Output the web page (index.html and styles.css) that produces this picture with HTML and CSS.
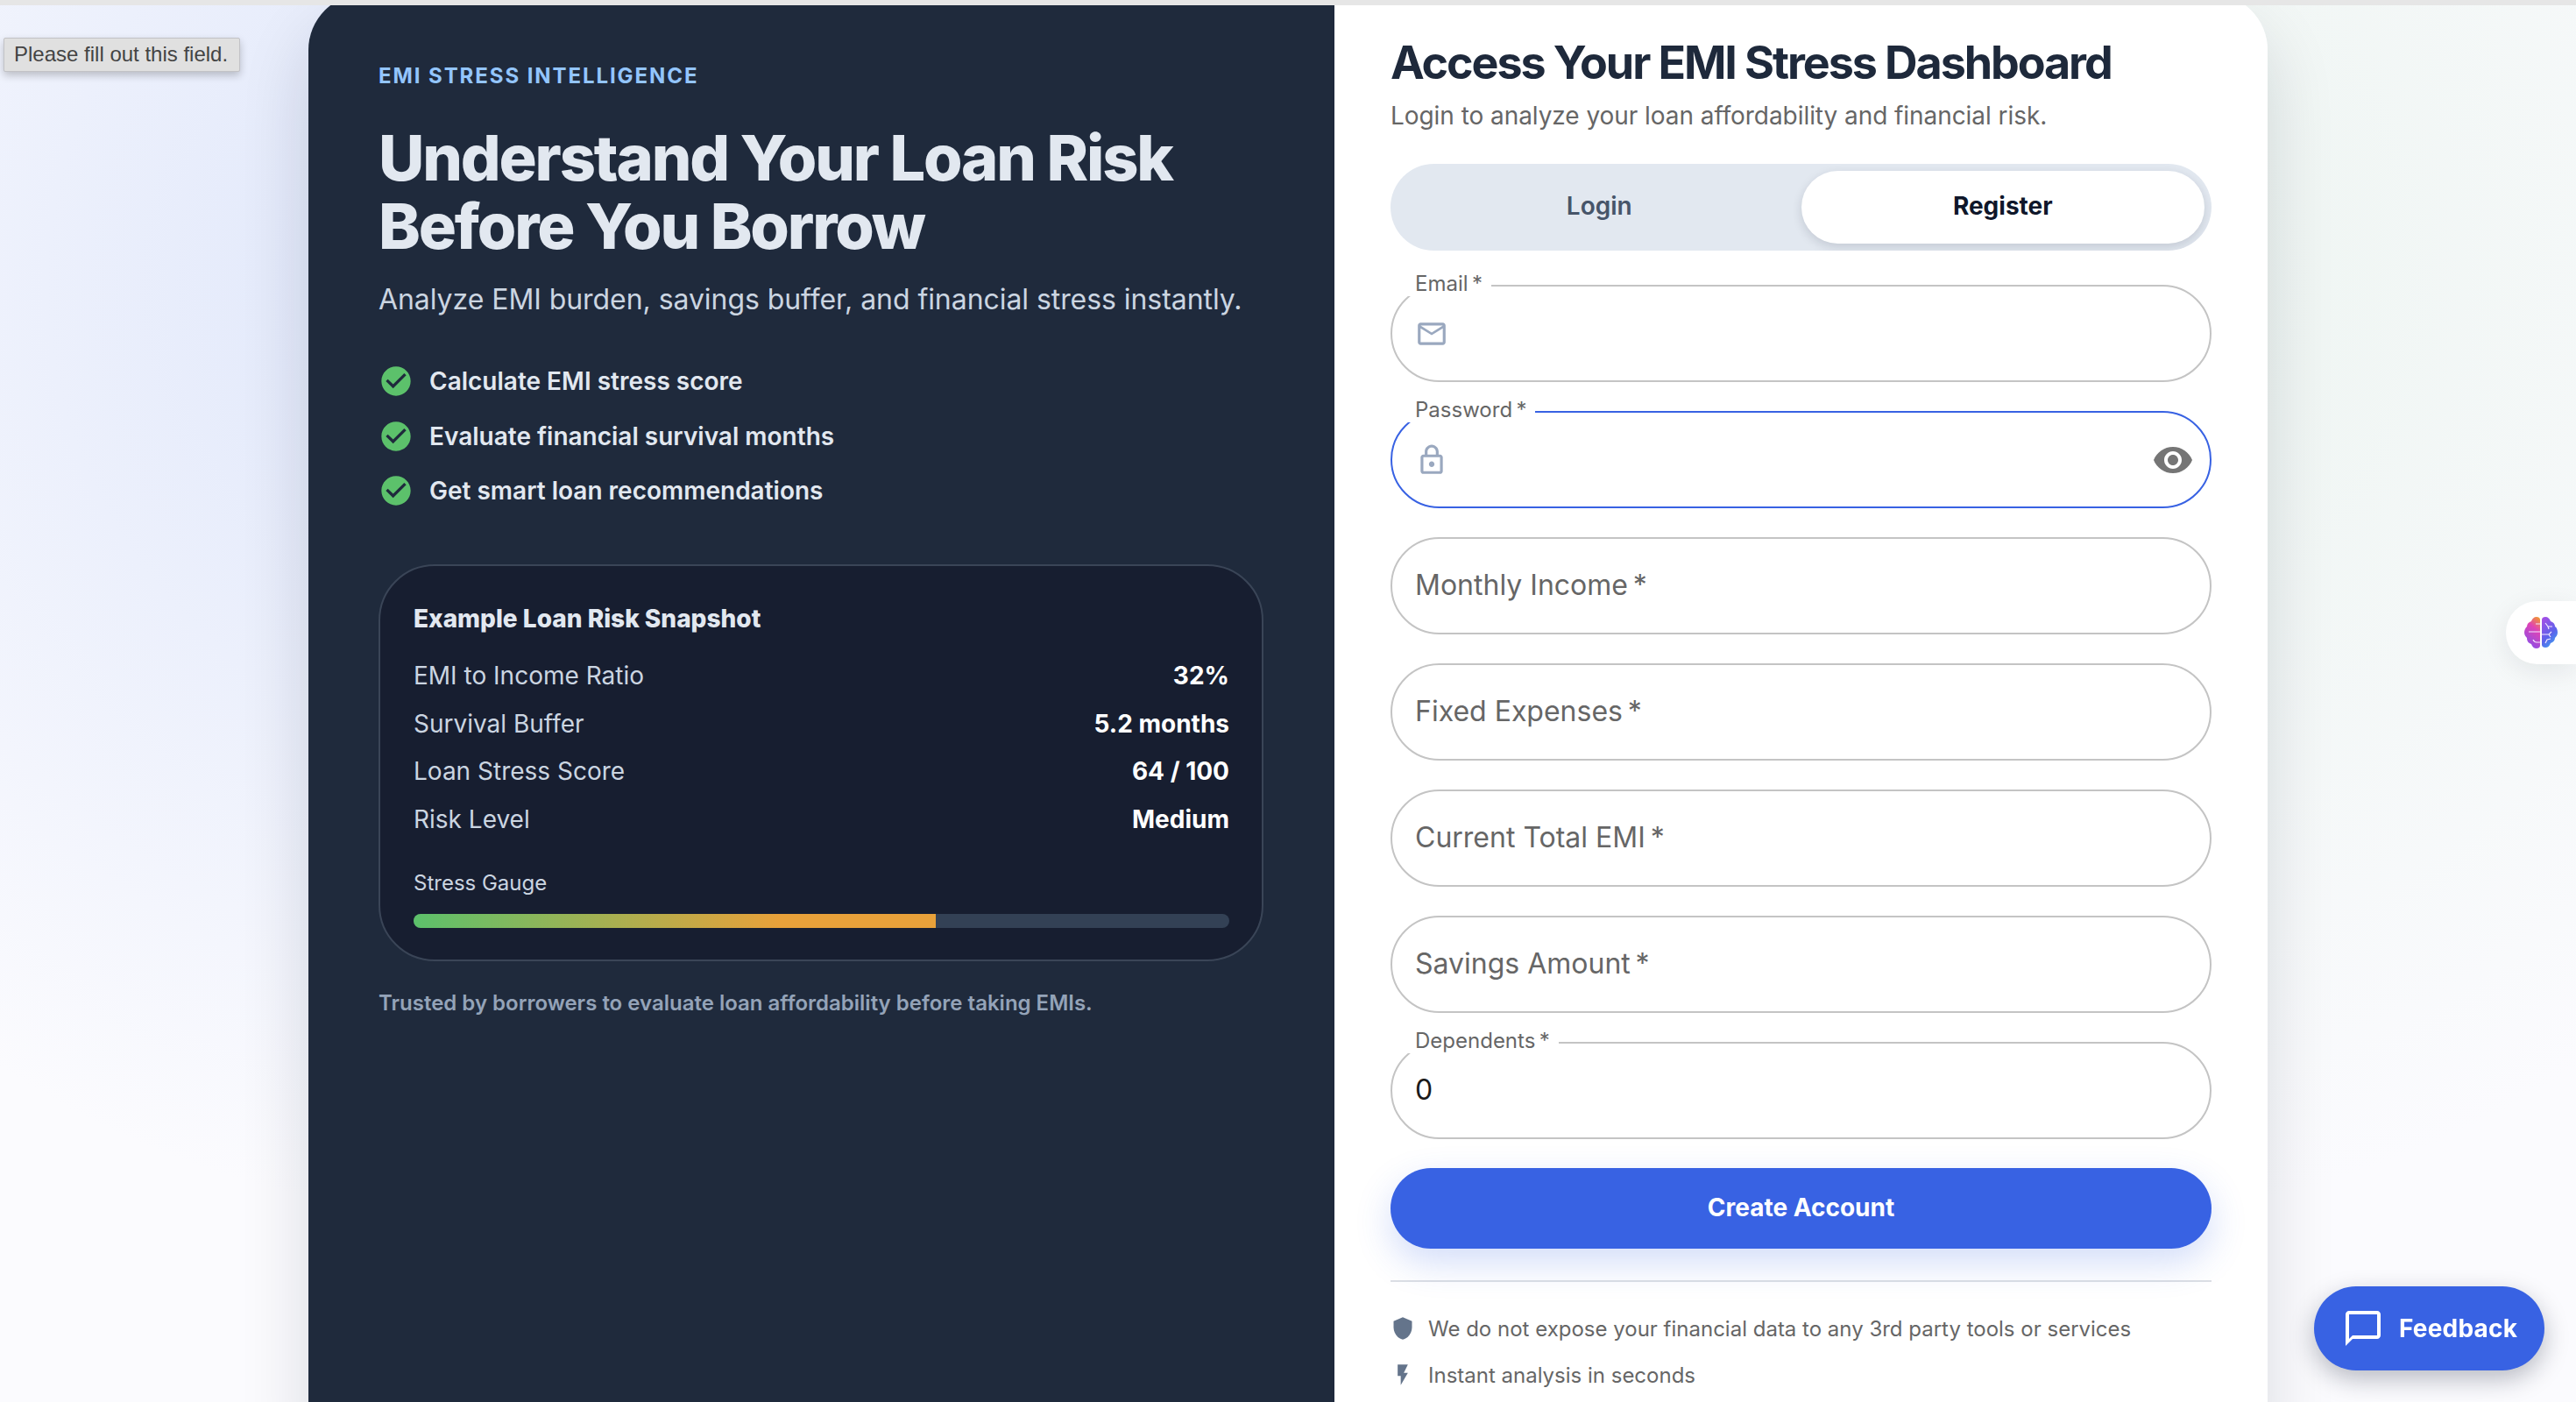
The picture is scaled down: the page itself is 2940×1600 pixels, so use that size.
FILE: index.html
```html
<!DOCTYPE html>
<html lang="en">
<head>
  <meta charset="UTF-8">
  <title>EMI Stress Dashboard</title>
  <link rel="stylesheet" href="styles.css">
</head>
<body>

  <div class="tooltip">Please fill out this field.</div>

  <div class="page">
    <main class="card">
      <section class="intro">
        <div class="eyebrow">EMI STRESS INTELLIGENCE</div>
        <h1>Understand Your Loan Risk<br>Before You Borrow</h1>
        <p class="lead">Analyze EMI burden, savings buffer, and financial stress instantly.</p>

        <ul class="checks">
          <li>
            <svg class="check-icon" viewBox="0 0 24 24"><path d="M12 2C6.48 2 2 6.48 2 12s4.48 10 10 10 10-4.48 10-10S17.52 2 12 2zm-2 15l-5-5 1.41-1.41L10 14.17l7.59-7.59L19 8l-9 9z"/></svg>
            Calculate EMI stress score
          </li>
          <li>
            <svg class="check-icon" viewBox="0 0 24 24"><path d="M12 2C6.48 2 2 6.48 2 12s4.48 10 10 10 10-4.48 10-10S17.52 2 12 2zm-2 15l-5-5 1.41-1.41L10 14.17l7.59-7.59L19 8l-9 9z"/></svg>
            Evaluate financial survival months
          </li>
          <li>
            <svg class="check-icon" viewBox="0 0 24 24"><path d="M12 2C6.48 2 2 6.48 2 12s4.48 10 10 10 10-4.48 10-10S17.52 2 12 2zm-2 15l-5-5 1.41-1.41L10 14.17l7.59-7.59L19 8l-9 9z"/></svg>
            Get smart loan recommendations
          </li>
        </ul>

        <div class="snapshot">
          <h3>Example Loan Risk Snapshot</h3>
          <div class="stats">
            <div class="stat"><span>EMI to Income Ratio</span><b>32%</b></div>
            <div class="stat"><span>Survival Buffer</span><b>5.2 months</b></div>
            <div class="stat"><span>Loan Stress Score</span><b>64 / 100</b></div>
            <div class="stat"><span>Risk Level</span><b>Medium</b></div>
          </div>
          <div class="gauge-label">Stress Gauge</div>
          <div class="gauge"><div class="gauge-fill" style="width: 64%"></div></div>
        </div>

        <p class="trusted">Trusted by borrowers to evaluate loan affordability before taking EMIs.</p>
      </section>

      <section class="auth">
        <h2>Access Your EMI Stress Dashboard</h2>
        <p class="auth-sub">Login to analyze your loan affordability and financial risk.</p>

        <div class="toggle">
          <button class="tab">Login</button>
          <button class="tab active">Register</button>
        </div>

        <form class="fields">
          <div class="field">
            <label>Email&#8201;*</label>
            <svg class="field-icon" viewBox="0 0 24 24"><path d="M20 4H4c-1.1 0-1.99.9-1.99 2L2 18c0 1.1.9 2 2 2h16c1.1 0 2-.9 2-2V6c0-1.1-.9-2-2-2zm0 14H4V8l8 5 8-5v10zm-8-7L4 6h16l-8 5z"/></svg>
            <input type="email">
          </div>
          <div class="field focused">
            <label>Password&#8201;*</label>
            <svg class="field-icon" viewBox="0 0 24 24"><path d="M18 8h-1V6c0-2.76-2.24-5-5-5S7 3.24 7 6v2H6c-1.1 0-2 .9-2 2v10c0 1.1.9 2 2 2h12c1.1 0 2-.9 2-2V10c0-1.1-.9-2-2-2zM9 6c0-1.66 1.34-3 3-3s3 1.34 3 3v2H9V6zm9 14H6V10h12v10zm-6-3c1.1 0 2-.9 2-2s-.9-2-2-2-2 .9-2 2 .9 2 2 2z"/></svg>
            <input type="password">
            <svg class="eye-icon" viewBox="0 0 24 24"><path d="M12 4.5C7 4.5 2.73 7.61 1 12c1.73 4.39 6 7.5 11 7.5s9.27-3.11 11-7.5c-1.73-4.39-6-7.5-11-7.5zM12 17c-2.76 0-5-2.24-5-5s2.24-5 5-5 5 2.24 5 5-2.24 5-5 5zm0-8c-1.66 0-3 1.34-3 3s1.34 3 3 3 3-1.34 3-3-1.34-3-3-3z"/></svg>
          </div>
          <div class="field"><input type="text" placeholder="Monthly Income&#8201;*"></div>
          <div class="field"><input type="text" placeholder="Fixed Expenses&#8201;*"></div>
          <div class="field"><input type="text" placeholder="Current Total EMI&#8201;*"></div>
          <div class="field"><input type="text" placeholder="Savings Amount&#8201;*"></div>
          <div class="field">
            <label>Dependents&#8201;*</label>
            <input type="text" value="0">
          </div>
          <button class="submit" type="button">Create Account</button>
        </form>

        <hr class="divider">

        <div class="notes">
          <div class="note">
            <svg class="note-icon" viewBox="0 0 24 24"><path d="M12 1L3 5v6c0 5.55 3.84 10.74 9 12 5.16-1.26 9-6.45 9-12V5l-9-4z"/></svg>
            We do not expose your financial data to any 3rd party tools or services
          </div>
          <div class="note">
            <svg class="note-icon" viewBox="0 0 24 24"><path d="M7 2v11h3v9l7-12h-4l4-8z"/></svg>
            Instant analysis in seconds
          </div>
        </div>
      </section>
    </main>
  </div>

  <div class="brain-tab">
    <svg class="brain" viewBox="0 0 38 36">
      <defs>
        <linearGradient id="brainLeft" x1="0.8" y1="0" x2="0.4" y2="1">
          <stop offset="0" stop-color="#f0913a"/>
          <stop offset="0.35" stop-color="#e043b4"/>
          <stop offset="1" stop-color="#8a4fe8"/>
        </linearGradient>
        <linearGradient id="brainRight" x1="0.2" y1="0" x2="0.7" y2="1">
          <stop offset="0" stop-color="#a24fe6"/>
          <stop offset="0.6" stop-color="#5c62ea"/>
          <stop offset="1" stop-color="#3fa0f0"/>
        </linearGradient>
      </defs>
      <path fill="url(#brainLeft)" d="M18 3c0-2-2-3-4-3C11 0 9 2 8 5 5 6 3 8 3 11c-2 2-3 4-3 7 0 3 2 5 3 6 0 4 2 6 5 7 1 3 3 5 6 5 2 0 4-1 4-3z"/>
      <path fill="url(#brainRight)" d="M20 3c0-2 2-3 4-3 3 0 5 2 6 5 3 1 5 3 5 6 2 1 3 4 3 7 0 3-2 5-3 6 0 3-2 5-5 6-1 3-3 5-6 5-2 0-4-1-4-3z"/>
      <path fill="none" stroke="#f3e8ff" stroke-width="1.2" d="M18 8h-5M5 17h13M18 29h-4c-2 0-3-1-4-3M24 7l3 4h5M27 11l1 3M31 17l-3 3 2 3M28 20h-8M24 30l2-4 4-1"/>
    </svg>
  </div>

  <button class="feedback">
    <svg class="feedback-icon" viewBox="0 0 24 24"><path d="M20 2H4c-1.1 0-2 .9-2 2v18l4-4h14c1.1 0 2-.9 2-2V4c0-1.1-.9-2-2-2zm0 14H6l-2 2V4h16v12z"/></svg>
    Feedback
  </button>

</body>
</html>
```

FILE: styles.css
```css
* {
  box-sizing: border-box;
}

html, body {
  height: 100%;
  overflow: hidden;
}

body {
  margin: 0;
  font-family: Inter, "Noto Sans", sans-serif;
  background: #e6e6e6;
}

.page {
  margin-top: 6px;
  height: 1594px;
  overflow: hidden;
  display: flex;
  justify-content: center;
  align-items: flex-start;
  background:
    radial-gradient(circle at 20% 20%, #dde5fa 0%, rgba(221, 229, 250, 0) 40%),
    radial-gradient(circle at 80% 20%, #ecf4f0 0%, rgba(236, 244, 240, 0) 40%),
    #fbfbfe;
}

.tooltip {
  position: absolute;
  z-index: 10;
  left: 4px;
  top: 43px;
  width: 270px;
  height: 39px;
  line-height: 36px;
  padding-left: 11px;
  font-family: "Liberation Sans", sans-serif;
  font-size: 24px;
  color: #444;
  background: #e0e0e0;
  border: 1px solid #c2c2c6;
  border-radius: 2px;
  box-shadow: 0 4px 10px rgba(0, 0, 0, 0.22);
}

.card {
  margin-top: -13px;
  width: 2236px;
  height: 1640px;
  flex-shrink: 0;
  display: grid;
  grid-template-columns: 1171px 1065px;
  border-radius: 64px 64px 0 0;
  overflow: hidden;
  box-shadow: 0 40px 80px rgba(15, 23, 42, 0.14);
}

/* left panel */
.intro {
  background: #1f2a3c;
  padding: 79px 80px 0;
}

.eyebrow {
  font-size: 24px;
  line-height: 29px;
  font-weight: 700;
  letter-spacing: 0.08em;
  color: #93c5fd;
}

h1 {
  margin: 40px 0 0;
  font-size: 72px;
  line-height: 78px;
  font-weight: 800;
  letter-spacing: -0.03em;
  color: #e2e8f0;
}

.lead {
  margin: 25px 0 0;
  font-size: 32px;
  line-height: 40px;
  letter-spacing: -0.06px;
  color: #cbd5e1;
}

.checks {
  list-style: none;
  margin: 53px 0 0;
  padding: 0;
  display: flex;
  flex-direction: column;
  gap: 22.5px;
}

.checks li {
  display: flex;
  align-items: center;
  gap: 18px;
  height: 40px;
  font-size: 28px;
  font-weight: 600;
  color: #e2e8f0;
}

.check-icon {
  width: 40px;
  height: 40px;
  fill: #5cc16b;
}

.snapshot {
  margin-top: 64px;
  width: 1010px;
  height: 453px;
  padding: 43px 37px 0 38px;
  background: #171e30;
  border: 2px solid #3a4557;
  border-radius: 64px;
}

.snapshot h3 {
  margin: 0;
  font-size: 28px;
  line-height: 34px;
  font-weight: 800;
  color: #e2e8f0;
}

.stats {
  margin-top: 31px;
  display: flex;
  flex-direction: column;
  gap: 20.5px;
}

.stat {
  display: flex;
  justify-content: space-between;
  font-size: 28px;
  line-height: 34px;
  color: #cbd5e1;
}

.stat b {
  font-weight: 700;
  color: #fff;
}

.gauge-label {
  margin-top: 41px;
  font-size: 24px;
  line-height: 30px;
  color: #cbd5e1;
}

.gauge {
  margin-top: 20px;
  height: 16px;
  background: #334155;
  border-radius: 8px;
  overflow: hidden;
}

.gauge-fill {
  height: 100%;
  background: linear-gradient(90deg, #5cc16b, #e8a13a 70%);
}

.trusted {
  margin: 32px 0 0;
  font-size: 24px;
  line-height: 32px;
  font-weight: 600;
  color: #94a3b8;
}

/* right panel */
.auth {
  background: #fff;
  padding: 47px 64px 0;
}

h2 {
  margin: 0;
  font-size: 52px;
  line-height: 64px;
  font-weight: 750;
  letter-spacing: -0.04em;
  color: #1e293b;
}

.auth-sub {
  margin: 10px 0 0;
  font-size: 28px;
  line-height: 36px;
  letter-spacing: -0.06px;
  color: #666;
}

.toggle {
  margin-top: 37px;
  height: 99px;
  padding: 8px;
  display: grid;
  grid-template-columns: 1fr 1fr;
  background: #e2e8f0;
  border-radius: 50px;
  overflow: hidden;
}

.tab {
  border: none;
  background: none;
  padding: 0 0 3px;
  font-family: inherit;
  font-size: 28px;
  font-weight: 600;
  color: #475569;
  border-radius: 42px;
}

.tab.active {
  background: #fff;
  color: #0f172a;
  font-weight: 700;
  box-shadow: 0 4px 12px rgba(15, 23, 42, 0.14);
}

.fields {
  margin-top: 39px;
  display: flex;
  flex-direction: column;
  gap: 33px;
}

.field {
  position: relative;
  height: 111px;
  display: flex;
  align-items: center;
  gap: 14px;
  padding: 0 26px;
  border: 2px solid #c4c4c4;
  border-radius: 56px;
}

.field.focused {
  border-color: #3862e3;
}

.field label {
  position: absolute;
  left: 16px;
  top: -17px;
  height: 28px;
  line-height: 28px;
  padding: 0 10px;
  font-size: 24px;
  color: #666;
  background: #fff;
}

.field input {
  flex: 1;
  min-width: 0;
  border: none;
  outline: none;
  padding: 0 0 2px;
  background: none;
  font-family: inherit;
  font-size: 32px;
  color: #1a1a1a;
}

.field input::placeholder {
  color: #666;
  opacity: 1;
}

.field-icon {
  width: 38px;
  height: 38px;
  fill: #9aa8bf;
}

.eye-icon {
  width: 48px;
  height: 48px;
  fill: #757575;
  margin-right: -8px;
}

.submit {
  height: 92px;
  border: none;
  border-radius: 46px;
  padding: 0 0 3px;
  background: #3862e3;
  color: #fff;
  font-family: inherit;
  font-size: 28px;
  font-weight: 700;
  box-shadow: 0 16px 40px rgba(56, 98, 227, 0.22);
}

.divider {
  margin: 36px 0 0;
  border: none;
  height: 2px;
  background: #dcdfe4;
}

.notes {
  margin-top: 38px;
  display: flex;
  flex-direction: column;
  gap: 23px;
}

.note {
  display: flex;
  align-items: center;
  gap: 15px;
  height: 30px;
  font-size: 24px;
  color: #666;
}

.note-icon {
  width: 28px;
  height: 28px;
  fill: #64748b;
}

/* floating widgets */
.brain-tab {
  position: fixed;
  right: 0;
  top: 686px;
  width: 80px;
  height: 72px;
  display: flex;
  align-items: center;
  padding-left: 21px;
  background: #fff;
  border-radius: 36px 0 0 36px;
  box-shadow: 0 8px 30px rgba(15, 23, 42, 0.08);
}

.brain {
  width: 38px;
  height: 36px;
}

.feedback {
  position: fixed;
  left: 2641px;
  top: 1468px;
  width: 263px;
  height: 96px;
  display: flex;
  align-items: center;
  gap: 17px;
  padding: 0 0 0 32px;
  border: none;
  border-radius: 48px;
  background: #3862e3;
  color: #fff;
  font-family: inherit;
  font-size: 28px;
  font-weight: 700;
  letter-spacing: 0.2px;
  box-shadow: 0 10px 28px rgba(15, 23, 42, 0.28);
}

.feedback-icon {
  width: 48px;
  height: 48px;
  fill: #fff;
}
```
